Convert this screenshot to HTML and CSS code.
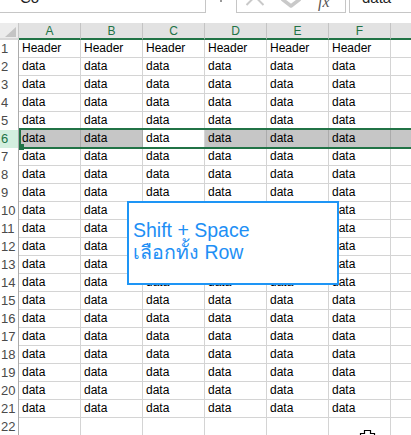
FILE: index.html
```html
<!DOCTYPE html>
<html>
<head>
<meta charset="utf-8">
<link rel="stylesheet" href="styles.css">
</head>
<body>
<div class="sheet">
  <div class="topbar">
    <div class="namebox"><span class="tb-text">Co</span></div>
    <div class="grip"><span class="dot"></span></div>
    <div class="fbuttons">
      <svg class="fb-svg" width="108" height="12" viewBox="0 0 108 12">
        <path d="M9.5 5 L18 -3.5 L26.5 5" fill="none" stroke="#c9c9c9" stroke-width="2"/>
        <path d="M45 -1 L54 6 L63 -1" fill="none" stroke="#c9c9c9" stroke-width="3.5" stroke-linejoin="round"/>
        <text x="81" y="7" class="fx">fx</text>
      </svg>
    </div>
    <div class="gap3"></div>
    <div class="inputbox"><span class="tb-text">data</span></div>
  </div>

  <div class="colhead">
    <div class="corner"><span class="tri"></span></div>
    <div class="ch">A</div><div class="ch">B</div><div class="ch">C</div><div class="ch">D</div><div class="ch">E</div><div class="ch">F</div>
    <div class="ch fillh"></div>
  </div>

  <div class="grid">
    <div class="row"><div class="rh">1</div><div class="c">Header</div><div class="c">Header</div><div class="c">Header</div><div class="c">Header</div><div class="c">Header</div><div class="c">Header</div><div class="f"></div></div>
    <div class="row"><div class="rh">2</div><div class="c">data</div><div class="c">data</div><div class="c">data</div><div class="c">data</div><div class="c">data</div><div class="c">data</div><div class="f"></div></div>
    <div class="row"><div class="rh">3</div><div class="c">data</div><div class="c">data</div><div class="c">data</div><div class="c">data</div><div class="c">data</div><div class="c">data</div><div class="f"></div></div>
    <div class="row"><div class="rh">4</div><div class="c">data</div><div class="c">data</div><div class="c">data</div><div class="c">data</div><div class="c">data</div><div class="c">data</div><div class="f"></div></div>
    <div class="row"><div class="rh">5</div><div class="c">data</div><div class="c">data</div><div class="c">data</div><div class="c">data</div><div class="c">data</div><div class="c">data</div><div class="f"></div></div>
    <div class="row sel"><div class="rh">6</div><div class="c">data</div><div class="c">data</div><div class="c active">data</div><div class="c">data</div><div class="c">data</div><div class="c">data</div><div class="f"></div><span class="handle"></span></div>
    <div class="row"><div class="rh">7</div><div class="c">data</div><div class="c">data</div><div class="c">data</div><div class="c">data</div><div class="c">data</div><div class="c">data</div><div class="f"></div></div>
    <div class="row"><div class="rh">8</div><div class="c">data</div><div class="c">data</div><div class="c">data</div><div class="c">data</div><div class="c">data</div><div class="c">data</div><div class="f"></div></div>
    <div class="row"><div class="rh">9</div><div class="c">data</div><div class="c">data</div><div class="c">data</div><div class="c">data</div><div class="c">data</div><div class="c">data</div><div class="f"></div></div>
    <div class="row"><div class="rh">10</div><div class="c">data</div><div class="c">data</div><div class="c">data</div><div class="c">data</div><div class="c">data</div><div class="c">data</div><div class="f"></div></div>
    <div class="row"><div class="rh">11</div><div class="c">data</div><div class="c">data</div><div class="c">data</div><div class="c">data</div><div class="c">data</div><div class="c">data</div><div class="f"></div></div>
    <div class="row"><div class="rh">12</div><div class="c">data</div><div class="c">data</div><div class="c">data</div><div class="c">data</div><div class="c">data</div><div class="c">data</div><div class="f"></div></div>
    <div class="row"><div class="rh">13</div><div class="c">data</div><div class="c">data</div><div class="c">data</div><div class="c">data</div><div class="c">data</div><div class="c">data</div><div class="f"></div></div>
    <div class="row"><div class="rh">14</div><div class="c">data</div><div class="c">data</div><div class="c">data</div><div class="c">data</div><div class="c">data</div><div class="c">data</div><div class="f"></div></div>
    <div class="row"><div class="rh">15</div><div class="c">data</div><div class="c">data</div><div class="c">data</div><div class="c">data</div><div class="c">data</div><div class="c">data</div><div class="f"></div></div>
    <div class="row"><div class="rh">16</div><div class="c">data</div><div class="c">data</div><div class="c">data</div><div class="c">data</div><div class="c">data</div><div class="c">data</div><div class="f"></div></div>
    <div class="row"><div class="rh">17</div><div class="c">data</div><div class="c">data</div><div class="c">data</div><div class="c">data</div><div class="c">data</div><div class="c">data</div><div class="f"></div></div>
    <div class="row"><div class="rh">18</div><div class="c">data</div><div class="c">data</div><div class="c">data</div><div class="c">data</div><div class="c">data</div><div class="c">data</div><div class="f"></div></div>
    <div class="row"><div class="rh">19</div><div class="c">data</div><div class="c">data</div><div class="c">data</div><div class="c">data</div><div class="c">data</div><div class="c">data</div><div class="f"></div></div>
    <div class="row"><div class="rh">20</div><div class="c">data</div><div class="c">data</div><div class="c">data</div><div class="c">data</div><div class="c">data</div><div class="c">data</div><div class="f"></div></div>
    <div class="row"><div class="rh">21</div><div class="c">data</div><div class="c">data</div><div class="c">data</div><div class="c">data</div><div class="c">data</div><div class="c">data</div><div class="f"></div></div>
    <div class="row"><div class="rh">22</div><div class="c"></div><div class="c"></div><div class="c"></div><div class="c"></div><div class="c"></div><div class="c"></div><div class="f"></div></div>
  </div>

  <div class="tip">
    <div class="tip-line">Shift + Space</div>
    <div class="tip-line">เลือกทั้ง Row</div>
  </div>

  <svg class="cursor" width="22" height="10" viewBox="0 0 22 10">
    <path d="M7.5 2.5 H13.5 V5.5 H17.5 V10 H3.5 V5.5 H7.5 Z" fill="#fff" stroke="#000" stroke-width="1.2"/>
  </svg>
</div>
</body>
</html>
```

FILE: styles.css
```css
html, body {
  margin: 0;
  padding: 0;
  background: #ffffff;
}
body {
  width: 411px;
  height: 435px;
  overflow: hidden;
  font-family: "Liberation Sans", Arial, sans-serif;
}
.sheet {
  position: relative;
  width: 411px;
  height: 435px;
  overflow: hidden;
}

/* top formula bar */
.topbar {
  display: flex;
  height: 13px;
  overflow: hidden;
}
.tb-text {
  display: block;
  margin-top: -11px;
  font-size: 15px;
  line-height: 18px;
  color: #222;
}
.namebox {
  width: 206px;
  flex: none;
  box-sizing: border-box;
  border-right: 1px solid #c6c6c6;
  border-bottom: 1px solid #c6c6c6;
  padding-left: 20px;
  overflow: hidden;
}
.grip {
  width: 30px;
  flex: none;
  display: flex;
  justify-content: center;
}
.dot {
  display: block;
  width: 2px;
  height: 2px;
  background: #9a9a9a;
}
.fbuttons {
  width: 110px;
  flex: none;
  box-sizing: border-box;
  border-left: 1px solid #c6c6c6;
  border-right: 1px solid #c6c6c6;
  border-bottom: 1px solid #c6c6c6;
  overflow: hidden;
}
.fb-svg {
  display: block;
}
.fx {
  font-family: "Liberation Serif", "Times New Roman", serif;
  font-style: italic;
  font-size: 16px;
  fill: #555555;
}
.gap3 {
  width: 3px;
  flex: none;
}
.inputbox {
  flex: 1;
  box-sizing: border-box;
  border-left: 1px solid #c6c6c6;
  border-bottom: 1px solid #c6c6c6;
  padding-left: 12px;
  overflow: hidden;
}

/* column headers */
.colhead {
  display: flex;
  margin-top: 10px;
  height: 17px;
}
.corner {
  width: 19px;
  flex: none;
  box-sizing: border-box;
  background: #ececec;
  border-right: 1px solid #c8c8c8;
  border-bottom: 2px solid #d8d8d8;
  display: flex;
  align-items: flex-end;
  justify-content: flex-end;
  padding: 0 2px 1px 0;
}
.tri {
  display: block;
  width: 0;
  height: 0;
  border-left: 11px solid transparent;
  border-bottom: 10px solid #c4c4c4;
}
.ch {
  width: 62px;
  flex: none;
  box-sizing: border-box;
  background: #e2e2e2;
  border-right: 1px solid #c4c4c4;
  border-bottom: 2px solid #217346;
  text-align: center;
  font-size: 12px;
  line-height: 16px;
  color: #217346;
}
.fillh {
  flex: 1;
  border-right: none;
}

/* grid */
.row {
  display: flex;
  height: 18px;
}
.rh {
  width: 19px;
  flex: none;
  box-sizing: border-box;
  border-right: 1px solid #ababab;
  padding-left: 1px;
  font-size: 13px;
  line-height: 17px;
  color: #4a4a4a;
  background: #ffffff;
}
.c {
  width: 62px;
  flex: none;
  box-sizing: border-box;
  border-right: 1px solid #d4d4d4;
  border-bottom: 1px solid #d4d4d4;
  padding-left: 3px;
  font-size: 12px;
  line-height: 17px;
  color: #000000;
  white-space: nowrap;
  overflow: hidden;
}
.f {
  flex: 1;
  box-sizing: border-box;
  border-bottom: 1px solid #d4d4d4;
}

/* selected row */
.sel {
  position: relative;
}
.sel .rh {
  background: #d3efdf;
  color: #217346;
}
.sel .c,
.sel .f {
  background: #c6c6c6;
  border-right-color: #ababab;
}
.sel .c.active {
  background: #ffffff;
  border-right-color: #d4d4d4;
}
.sel::after {
  content: "";
  position: absolute;
  left: 19px;
  top: -2px;
  right: -6px;
  bottom: -1px;
  border: 2px solid #217346;
  pointer-events: none;
}
.handle {
  position: absolute;
  left: 19px;
  top: 14px;
  width: 5px;
  height: 6px;
  background: #217346;
  z-index: 2;
}

/* tooltip */
.tip {
  position: absolute;
  left: 127px;
  top: 201px;
  width: 212px;
  height: 84px;
  box-sizing: border-box;
  border: 2px solid #1e95f5;
  background: #ffffff;
  padding: 17px 0 0 4px;
  color: #1e8ff5;
  font-size: 19.5px;
  line-height: 21.5px;
}
.tip-line {
  white-space: nowrap;
}

.cursor {
  position: absolute;
  left: 357px;
  top: 428px;
}
```
